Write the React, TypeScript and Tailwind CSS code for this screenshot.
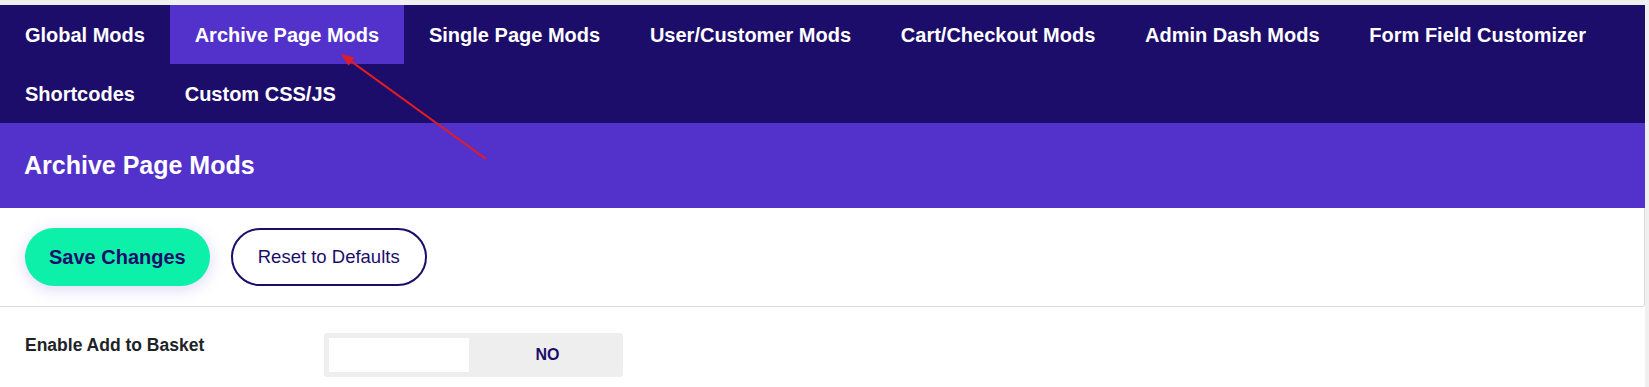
const tabs = [
  "Global Mods",
  "Archive Page Mods",
  "Single Page Mods",
  "User/Customer Mods",
  "Cart/Checkout Mods",
  "Admin Dash Mods",
  "Form Field Customizer",
  "Shortcodes",
  "Custom CSS/JS",
];

const App = () => {
  return (
    <div
      className="relative min-h-[387px] bg-[#f0f0f1] pt-[5px] pr-[4px]"
      style={{ fontFamily: '"Liberation Sans", Arial, sans-serif' }}
    >
      <div className="bg-white min-h-[382px]">
        {/* tab bar */}
        <nav className="flex flex-wrap bg-[#1d0d6b]">
          {tabs.map((t) => (
            <div
              key={t}
              className={
                t === "Archive Page Mods"
                  ? "flex items-center h-[59px] px-[24.9px] text-[20px] font-bold leading-none text-white bg-[#5332cb]"
                  : "flex items-center h-[59px] px-[24.9px] text-[20px] font-bold leading-none text-white"
              }
            >
              {t}
            </div>
          ))}
        </nav>

        <div className="flex items-center h-[85px] px-[24px] bg-[#5332cb]">
          <h1 className="text-[25px] font-bold text-white leading-none">Archive Page Mods</h1>
        </div>

        <div className="flex items-center gap-[21px] px-[25px] py-[20px] border-b border-r border-[#dcdcde] rounded-br-[3px]">
          <button className="h-[58px] px-[24px] rounded-full bg-[#0cf0a9] text-[#1d0d6b] text-[20px] font-bold shadow-[0_3px_16px_rgba(83,50,203,0.2)]">
            Save Changes
          </button>
          <button className="h-[58px] px-[25px] rounded-full border-2 border-[#1d0d6b] bg-white text-[#1d0d6b] text-[18.5px]">
            Reset to Defaults
          </button>
        </div>

        <div className="flex items-start pt-[26px] pl-[25px]">
          <label className="w-[299px] text-[17.5px] font-bold leading-[24px] text-[#1d2327]">
            Enable Add to Basket
          </label>
          <div className="flex w-[299px] h-[44px] p-[5px] rounded-[3px] bg-[#eeeeee]">
            <div className="w-[140px] h-full bg-white"></div>
            <div className="flex flex-1 items-center justify-center pl-[8px] text-[16px] font-bold text-[#1d0d6b]">NO</div>
          </div>
        </div>
      </div>

      {/* annotation arrow */}
      <svg className="absolute left-0 top-0 pointer-events-none" width="1649" height="387">
        <line x1="486" y1="159" x2="351.5" y2="61.6" stroke="#e31b23" strokeWidth="2" />
        <polygon points="341,54 354.4,57.6 348.6,65.7" fill="#e31b23" />
      </svg>
    </div>
  );
};

export default App;
